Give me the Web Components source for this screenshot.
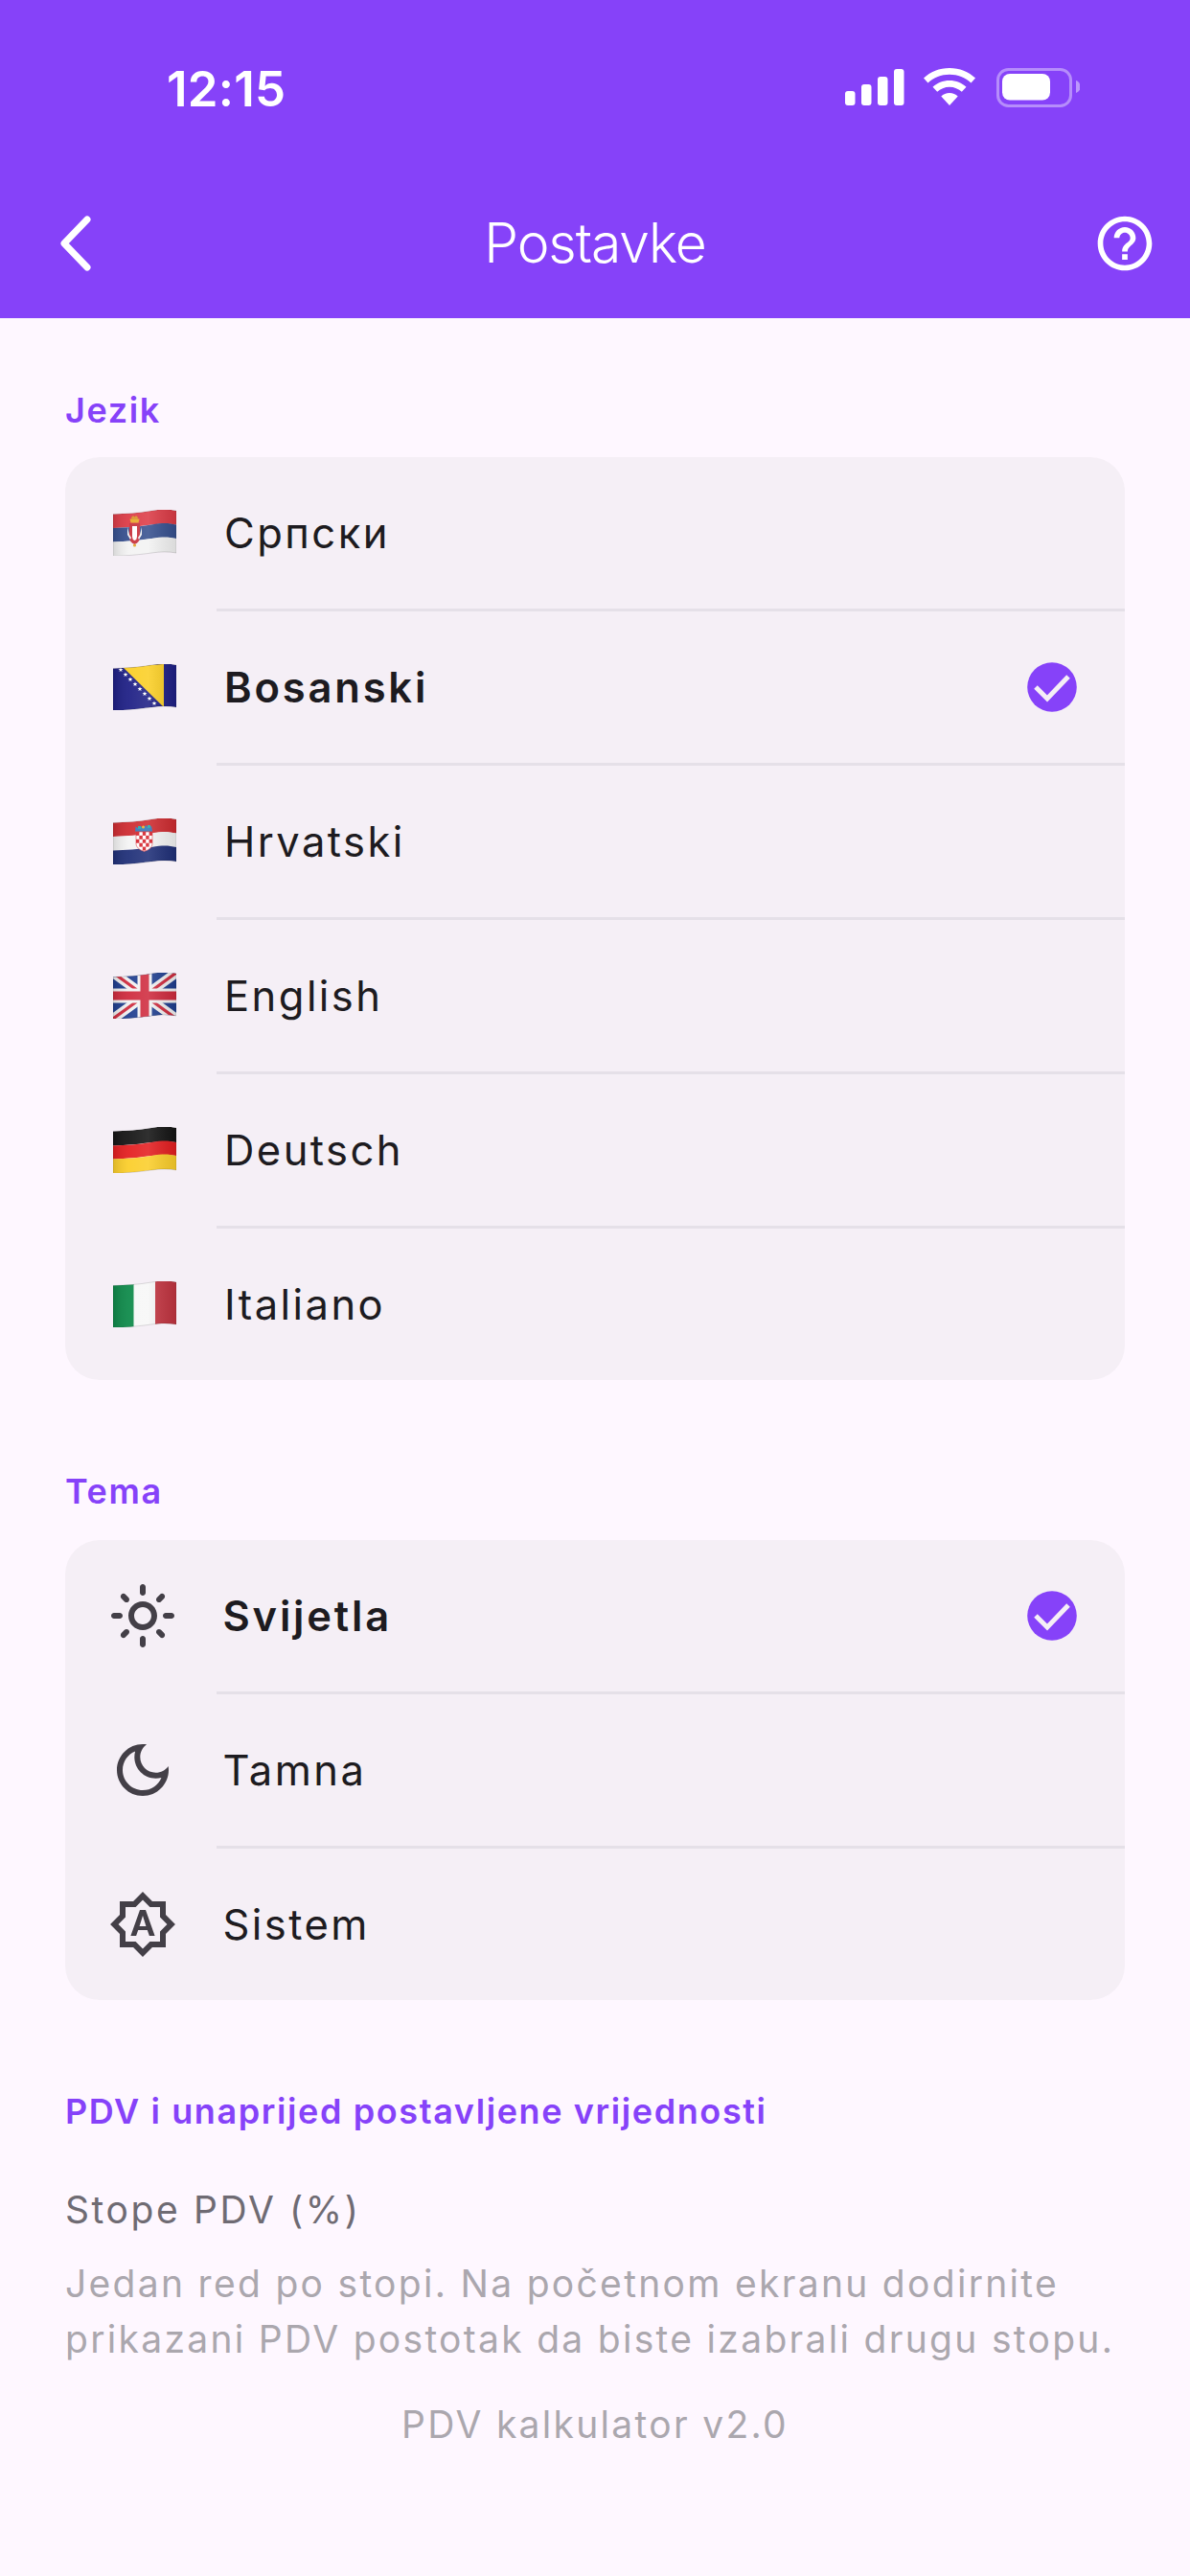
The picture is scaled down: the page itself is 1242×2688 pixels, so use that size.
<!DOCTYPE html>
<html><head><meta charset="utf-8">
<style>
html,body{margin:0;padding:0;background:#FEF7FF;}
body{font-family:Inter,"Noto Sans",sans-serif;width:1242px;height:2688px;overflow:hidden;}
settings-screen{display:block}
</style></head><body>
<settings-screen></settings-screen>
<script>
const P='#8642F9';
function wave(y){return `${0},${y+4.5} C14,${y+4} 26,${y+3.5} 40,${y+1} S58,${y-0.5} 66,${y+1}`;}
function waveBack(y){return `L66,${y+1} C58,${y-0.5} 50,${y-0.5} 40,${y+1} S14,${y+4} 0,${y+4.5}`;}
function band(y1,y2,c){return `<path d="M${wave(y1)} ${waveBack(y2)} Z" fill="${c}"/>`;}
function star(x,y,r,c){let p=[];for(let i=0;i<10;i++){const a=-Math.PI/2+i*Math.PI/5,q=i%2?r*.42:r;p.push((x+q*Math.cos(a)).toFixed(2)+','+(y+q*Math.sin(a)).toFixed(2));}return `<polygon points="${p.join(' ')}" fill="${c}"/>`;}
const flags={
 rs:()=>band(0,14.5,'#DC3B46')+band(14.5,29,'#36508F')+band(29,44,'#F3F3F3')+
  `<path d="M17 14h11v14q0 6-5.5 8q-5.5-2-5.5-8z" fill="#C8313C"/><path d="M20 17h5v11q0 3-2.5 4q-2.5-1-2.5-4z" fill="#fff"/><path d="M17.5 9.500h10l-1 4h-8z" fill="#E8A92A"/><path d="M19 8l2-2 1.500 1.500 1.500-1.500 2 2-.5 2h-6z" fill="#D9932A"/><path d="M15 18l2 8 2 3-1 2-3-5zM30 18l-2 8-2 3 1 2 3-5z" fill="#F2F2F2"/><circle cx="22.5" cy="37" r="1.6" fill="#E2A52B"/>`,
 ba:()=>band(0,44,'#1E1F85')+`<path d="M10 3 L53 0 V45 Z" fill="#FBCF25"/>`+
  [[8,6],[13,11],[18,16],[23,21],[28,26],[33,31],[38,36],[43,41]].map(a=>star(a[0],a[1],2.6,'#fff')).join(''),
 hr:()=>band(0,14.5,'#CE2B30')+band(14.5,29,'#F4F4F4')+band(29,44,'#1F2F78')+
  `<path d="M24 14h17v12.500q0 5-8.500 8q-8.500-3-8.500-8z" fill="#fff" stroke="#D83A40" stroke-width=".6"/>`+
  (()=>{let s='';for(let r=0;r<5;r++)for(let c=0;c<5;c++)if((r+c)%2==0&&!(r==4&&(c==0||c==4)))s+=`<rect x="${24+c*3.4}" y="${14+r*3.9}" width="3.4" height="3.9" fill="#D5222B"/>`;return s;})()+
  `<path d="M23 13.500l.6-5 3 2 1.500-3 3 2.500 3.500-3 2 3 3.500-2 1 5.500z" fill="#2F77B8"/><path d="M26 8h3v3h-3zM36 7h3v3h-3z" fill="#1FA7A8"/><circle cx="31.500" cy="9" r="1.5" fill="#E8B22A"/>`,
 gb:()=>`<rect width="66" height="48" fill="#1F3E8F"/>
   <path d="M0 0L66 48M66 0L0 48" stroke="#F0F0F0" stroke-width="10"/>
   <path d="M0 0L33 24M66 0L33 24M0 48L33 24M66 48L33 24" stroke="#CF2B3E" stroke-width="3.2"/>
   <path d="M33 0V48M0 24H66" stroke="#F2F2F2" stroke-width="15"/>
   <path d="M33 0V48M0 24H66" stroke="#CF2B3E" stroke-width="9"/>`,
 de:()=>band(0,15,'#141414')+band(15,29,'#E41E20')+band(29,44,'#FBCE2A'),
 it:()=>`<rect width="22" height="48" fill="#0E8A4A"/><rect x="21.5" width="23" height="48" fill="#F7F7F7"/><rect x="44" width="22" height="48" fill="#C23440"/>`
};
const shapeD=`M${wave(0)} ${waveBack(44)} Z`;
class FlagIcon extends HTMLElement{
 connectedCallback(){
  const s=this.shadowRoot||this.attachShadow({mode:'open'});
  const code=this.getAttribute('code');
  s.innerHTML=`<style>:host{display:block;width:66px;height:48px;flex:none}svg{display:block}</style>
  <svg width="66" height="48" viewBox="0 0 66 48">
   <defs><clipPath id="c"><path d="${shapeD}"/></clipPath>
   <linearGradient id="g" x1="0" x2="1" y1="0" y2="0"><stop offset="0" stop-color="#000" stop-opacity=".12"/><stop offset=".25" stop-color="#fff" stop-opacity=".06"/><stop offset=".55" stop-color="#fff" stop-opacity=".12"/><stop offset="1" stop-color="#000" stop-opacity=".1"/></linearGradient></defs>
   <g clip-path="url(#c)">${flags[code]()}<rect width="66" height="48" fill="url(#g)"/></g>
   <path d="${shapeD}" fill="none" stroke="#000" stroke-opacity=".18" stroke-width=".7"/>
  </svg>`;
 }
}
customElements.define('flag-icon',FlagIcon);

class StatusBar extends HTMLElement{
 constructor(){super();this.attachShadow({mode:'open'}).innerHTML=`<style>
  :host{display:flex;height:176px;box-sizing:border-box;padding:0 115px 0 174px;align-items:flex-start;justify-content:space-between;color:#fff}
  .t{font:600 51px/48px Inter,sans-serif;margin-top:69px;letter-spacing:.2px}
  svg{display:block;margin-top:71px}
 </style><span class="t">12:15</span>
 <svg width="245" height="41" viewBox="882 71 245 41" fill="#fff">
  <rect x="882" y="95" width="10.5" height="15" rx="3"/><rect x="899" y="88" width="10.5" height="22" rx="3"/><rect x="916" y="80" width="10.5" height="30" rx="3"/><rect x="933" y="72" width="10.5" height="38" rx="3"/>
  <path d="M991 71c10.500 0 20 4 27 10.500l-4.500 5c-6-5.500-14-8.700-22.500-8.700s-16.500 3.200-22.500 8.700l-4.500-5C971 75 980.500 71 991 71z"/>
  <path d="M991 84c6.800 0 13 2.600 17.500 6.800l-4.700 5c-3.300-3-7.900-5-12.800-5s-9.500 2-12.800 5l-4.700-5C978 86.600 984.200 84 991 84z"/>
  <path d="M991 97c3.500 0 6.500 1.300 8.700 3.400L991 110l-8.700-9.600c2.200-2.100 5.200-3.400 8.700-3.400z"/>
  <rect x="1041.5" y="72.5" width="76" height="38" rx="11" fill="none" stroke="#fff" stroke-opacity=".4" stroke-width="3"/>
  <rect x="1046" y="77" width="50" height="27.5" rx="8"/>
  <path d="M1123 84c3 1 4.500 3.500 4.500 6.500s-1.500 5.500-4.500 6.500z" fill-opacity=".45"/>
 </svg>`;}
}
customElements.define('status-bar',StatusBar);

class AppHeader extends HTMLElement{
 constructor(){super();this.attachShadow({mode:'open'}).innerHTML=`<style>
  :host{display:block;background:${P};height:332px;color:#fff}
  .nav{display:grid;grid-template-columns:1fr auto 1fr;align-items:center;height:156px;padding:0 34px;box-sizing:border-box}
  .title{font:300 57px/68px Inter,sans-serif;letter-spacing:-1.1px}
  .l{display:block;margin-left:26px}
  .r{justify-self:end;display:block}
 </style><status-bar></status-bar><div class="nav">
  <svg class="l" width="36" height="60" viewBox="0 0 36 60" fill="none" stroke="#fff" stroke-width="7" stroke-linecap="round" stroke-linejoin="round"><path d="M31 5L7 30L31 55"/></svg>
  <span class="title">Postavke</span>
  <svg class="r" width="68" height="68" viewBox="0 0 24 24" fill="#fff"><path d="M11 18h2v-2h-2v2zm1-16C6.480 2 2 6.480 2 12s4.480 10 10 10 10-4.480 10-10S17.520 2 12 2zm0 18c-4.410 0-8-3.590-8-8s3.590-8 8-8 8 3.590 8 8-3.590 8-8 8zm0-14c-2.210 0-4 1.790-4 4h2c0-1.100.900-2 2-2s2 .900 2 2c0 2-3 1.750-3 5h2c0-2.250 3-2.500 3-5 0-2.210-1.790-4-4-4z"/></svg>
 </div>`;}
}
customElements.define('app-header',AppHeader);

class SectionLabel extends HTMLElement{
 constructor(){super();this.attachShadow({mode:'open'}).innerHTML=`<style>
  :host{display:block;color:${P};font:600 36px/40px Inter,sans-serif;letter-spacing:1.6px}
 </style><slot></slot>`;}
}
customElements.define('section-label',SectionLabel);

class OptionCard extends HTMLElement{
 constructor(){super();this.attachShadow({mode:'open'}).innerHTML=`<style>
  :host{display:block;background:#F5EFF6;border-radius:36px;overflow:hidden}
 </style><slot></slot>`;}
}
customElements.define('option-card',OptionCard);

class OptionRow extends HTMLElement{
 constructor(){super();const sel=this.hasAttribute('selected');const th=this.hasAttribute('theme');
 this.attachShadow({mode:'open'}).innerHTML=`<style>
  :host{display:block}
  .row{display:flex;align-items:center;height:158px;box-sizing:border-box;padding:0 50px 0 ${th?45:50}px;font:${sel?600:400} 43.5px/56px Inter,sans-serif;color:#1D1B20;letter-spacing:${sel?2.8:2.45}px}
  .ic{width:${th?72:66}px;display:flex;justify-content:center;margin-right:${th?47.5:50}px;flex:none}
  .txt{flex:1}
  hr{margin:0 0 0 158px;border:0;height:3px;background:#E5E0E8}
  :host([last]) hr{display:none}
  svg{display:block}
 </style><div class="row"><div class="ic"><slot name="icon"></slot></div><span class="txt"><slot></slot></span>${sel?`<svg width="52" height="52" viewBox="0 0 52 52"><circle cx="26" cy="26" r="25.8" fill="${P}"/><path d="M9 27L21 39L43 16" transform="translate(0 -1)" fill="none" stroke="#F5EFF6" stroke-width="5"/></svg>`:''}</div><hr>`;}
}
customElements.define('option-row',OptionRow);

class ThemeIcon extends HTMLElement{
 constructor(){super();const d={
  sun:'M12 9c1.650 0 3 1.350 3 3s-1.350 3-3 3-3-1.350-3-3 1.350-3 3-3m0-2c-2.760 0-5 2.240-5 5s2.240 5 5 5 5-2.240 5-5-2.240-5-5-5zM2 13h2c.55 0 1-.45 1-1s-.45-1-1-1H2c-.55 0-1 .45-1 1s.45 1 1 1zm18 0h2c.55 0 1-.45 1-1s-.45-1-1-1h-2c-.55 0-1 .45-1 1s.45 1 1 1zM11 2v2c0 .55.45 1 1 1s1-.45 1-1V2c0-.55-.45-1-1-1s-1 .45-1 1zm0 18v2c0 .55.45 1 1 1s1-.45 1-1v-2c0-.55-.45-1-1-1s-1 .45-1 1zM5.990 4.580c-.39-.39-1.030-.39-1.410 0-.39.39-.39 1.030 0 1.410l1.060 1.060c.39.39 1.030.39 1.410 0s.39-1.030 0-1.410L5.990 4.580zm12.370 12.370c-.39-.39-1.030-.39-1.410 0-.39.39-.39 1.030 0 1.410l1.060 1.060c.39.39 1.030.39 1.410 0 .39-.39.39-1.030 0-1.410l-1.060-1.060zm1.060-10.960c.39-.39.39-1.030 0-1.410-.39-.39-1.030-.39-1.410 0l-1.060 1.060c-.39.39-.39 1.030 0 1.410s1.030.39 1.410 0l1.060-1.060zM7.050 18.360c.39-.39.39-1.030 0-1.410-.39-.39-1.030-.39-1.410 0l-1.060 1.060c-.39.39-.39 1.030 0 1.410s1.030.39 1.410 0l1.060-1.060z',
  moon:'M9.370 5.510c-.18.64-.27 1.310-.27 1.990 0 4.080 3.320 7.400 7.400 7.400.68 0 1.350-.09 1.990-.27C17.450 17.190 14.930 19 12 19c-3.860 0-7-3.140-7-7 0-2.930 1.810-5.450 4.370-6.490zM12 3c-4.970 0-9 4.030-9 9s4.030 9 9 9 9-4.030 9-9c0-.46-.04-.92-.1-1.360-.98 1.370-2.580 2.260-4.400 2.260-2.980 0-5.400-2.420-5.400-5.400 0-1.810.89-3.420 2.260-4.400-.44-.06-.9-.1-1.360-.1z',
  auto:'M11 7l-3.200 9h1.900l.7-2h3.200l.7 2h1.900L13 7h-2zm-.15 5.650L12 9l1.150 3.650h-2.300zM20 8.690V4h-4.690L12 .69 8.690 4H4v4.690L.69 12 4 15.310V20h4.690L12 23.310 15.310 20H20v-4.690L23.310 12 20 8.690zm-2 5.790V18h-3.520L12 20.480 9.520 18H6v-3.520L3.520 12 6 9.520V6h3.520L12 3.520 14.480 6H18v3.520L20.480 12 18 14.480z'}[this.getAttribute('name')];
 this.attachShadow({mode:'open'}).innerHTML=`<style>:host{display:block;width:72px;height:72px}svg{display:block}</style><svg width="72" height="72" viewBox="0 0 24 24" fill="#433F47"><path d="${d}"/></svg>`;}
}
customElements.define('theme-icon',ThemeIcon);

class VatInfo extends HTMLElement{
 constructor(){super();this.attachShadow({mode:'open'}).innerHTML=`<style>
  :host{display:block;margin-top:54px;letter-spacing:2.3px}
  .s{font:400 39px/58px Inter,sans-serif;color:#6F6B73;letter-spacing:2.6px}
  .h{font:400 39px/58px Inter,sans-serif;color:#ABA7AE;margin-top:19px;white-space:nowrap}
 </style><div class="s">Stope PDV (%)</div><div class="h">Jedan red po stopi. Na početnom ekranu dodirnite<br>prikazani PDV postotak da biste izabrali drugu stopu.</div>`;}
}
customElements.define('vat-info',VatInfo);

class SettingsScreen extends HTMLElement{
 constructor(){super();this.attachShadow({mode:'open'}).innerHTML=`<style>
  :host{display:block}
  main{padding:76px 68px 0;display:flex;flex-direction:column}
  section-label{margin-bottom:29px}
  .t2{margin-top:96px;margin-bottom:31px}
  .t3{margin-top:96px;margin-bottom:0}
  footer{font:400 39px/58px Inter,sans-serif;color:#ABA7AE;text-align:center;letter-spacing:2.3px;margin-top:31px}
 </style><app-header></app-header><main>
  <section-label>Jezik</section-label>
  <option-card>
   <option-row><flag-icon slot="icon" code="rs"></flag-icon>Српски</option-row>
   <option-row selected><flag-icon slot="icon" code="ba"></flag-icon>Bosanski</option-row>
   <option-row><flag-icon slot="icon" code="hr"></flag-icon>Hrvatski</option-row>
   <option-row><flag-icon slot="icon" code="gb"></flag-icon>English</option-row>
   <option-row><flag-icon slot="icon" code="de"></flag-icon>Deutsch</option-row>
   <option-row last><flag-icon slot="icon" code="it"></flag-icon>Italiano</option-row>
  </option-card>
  <section-label class="t2">Tema</section-label>
  <option-card>
   <option-row theme selected><theme-icon slot="icon" name="sun"></theme-icon>Svijetla</option-row>
   <option-row theme><theme-icon slot="icon" name="moon"></theme-icon>Tamna</option-row>
   <option-row theme last><theme-icon slot="icon" name="auto"></theme-icon>Sistem</option-row>
  </option-card>
  <section-label class="t3">PDV i unaprijed postavljene vrijednosti</section-label>
  <vat-info></vat-info>
  <footer>PDV kalkulator v2.0</footer>
 </main>`;}
}
customElements.define('settings-screen',SettingsScreen);
</script>
</body></html>
